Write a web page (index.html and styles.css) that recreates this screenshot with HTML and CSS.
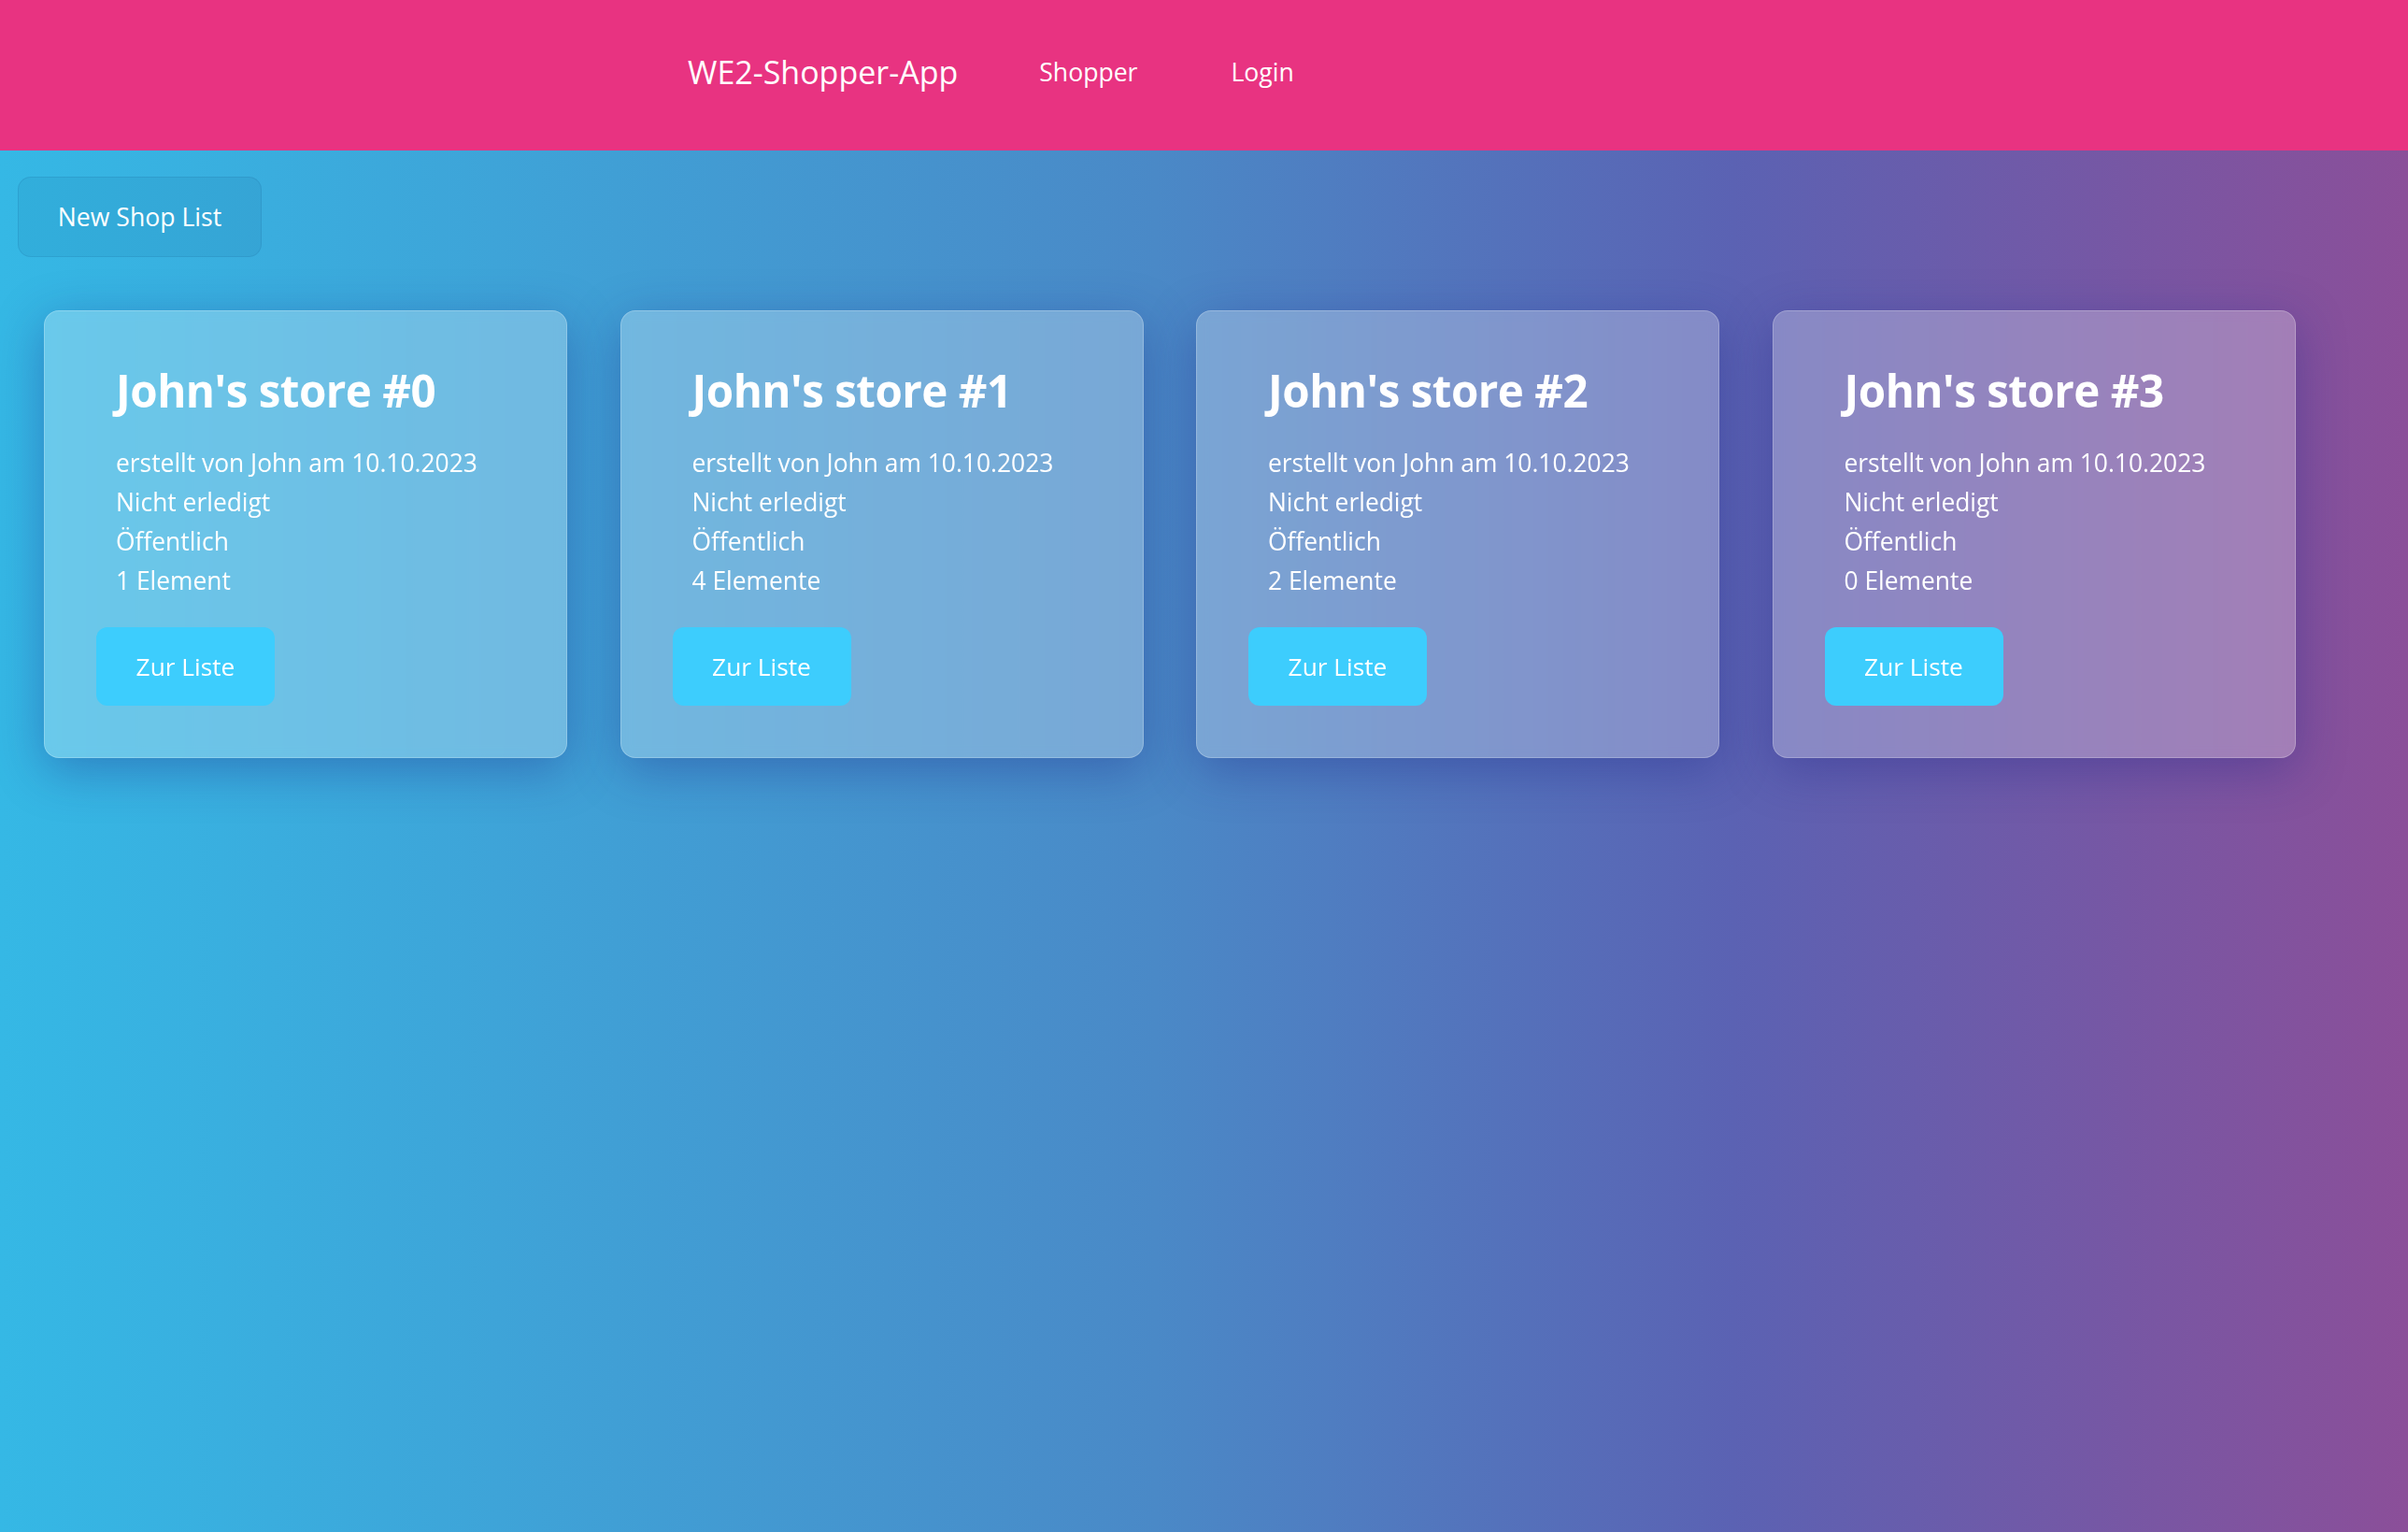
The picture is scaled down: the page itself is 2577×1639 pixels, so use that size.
FILE: index.html
```html
<!DOCTYPE html>
<html lang="de">
<head>
<meta charset="utf-8">
<title>WE2-Shopper-App</title>
<link rel="stylesheet" href="styles.css">
</head>
<body>
<header class="topbar">
  <nav class="nav">
    <a class="brand" href="#">WE2-Shopper-App</a>
    <a class="nav-link" href="#">Shopper</a>
    <a class="nav-link" href="#">Login</a>
  </nav>
</header>
<main class="main">
  <div class="toolbar">
    <button class="btn-new" type="button">New Shop List</button>
  </div>
  <section class="cards">
    <article class="card">
      <div class="card-text">
        <h2 class="card-title">John's store #0</h2>
        <p class="meta">erstellt von John am 10.10.2023</p>
        <p class="meta">Nicht erledigt</p>
        <p class="meta">Öffentlich</p>
        <p class="meta">1 Element</p>
      </div>
      <button class="btn-list" type="button">Zur Liste</button>
    </article>
    <article class="card">
      <div class="card-text">
        <h2 class="card-title">John's store #1</h2>
        <p class="meta">erstellt von John am 10.10.2023</p>
        <p class="meta">Nicht erledigt</p>
        <p class="meta">Öffentlich</p>
        <p class="meta">4 Elemente</p>
      </div>
      <button class="btn-list" type="button">Zur Liste</button>
    </article>
    <article class="card">
      <div class="card-text">
        <h2 class="card-title">John's store #2</h2>
        <p class="meta">erstellt von John am 10.10.2023</p>
        <p class="meta">Nicht erledigt</p>
        <p class="meta">Öffentlich</p>
        <p class="meta">2 Elemente</p>
      </div>
      <button class="btn-list" type="button">Zur Liste</button>
    </article>
    <article class="card">
      <div class="card-text">
        <h2 class="card-title">John's store #3</h2>
        <p class="meta">erstellt von John am 10.10.2023</p>
        <p class="meta">Nicht erledigt</p>
        <p class="meta">Öffentlich</p>
        <p class="meta">0 Elemente</p>
      </div>
      <button class="btn-list" type="button">Zur Liste</button>
    </article>
  </section>
</main>
</body>
</html>
```

FILE: styles.css
```css
* { box-sizing: border-box; }

html, body {
  margin: 0;
  padding: 0;
}

body {
  min-height: 100vh;
  font-family: "Open Sans", "Noto Sans", sans-serif;
  color: #fff;
  background: linear-gradient(to right, #35b8e5 0%, #4a89c7 48%, #5b62b3 72%, #8b4f99 100%);
}

.topbar {
  height: 161px;
  background: #e83381;
  display: flex;
  align-items: center;
}

.nav {
  display: flex;
  align-items: center;
  padding-left: 736px;
  padding-bottom: 7px;
}

.brand {
  color: #fff;
  text-decoration: none;
  font-size: 34px;
  margin-right: 87px;
}

.nav-link {
  color: #fff;
  text-decoration: none;
  font-size: 26.6px;
  margin-right: 100px;
}

.main {
  padding: 28px 19px 0 47px;
}

.toolbar {
  margin-left: -28px;
}

.btn-new {
  width: 261px;
  height: 86px;
  border-radius: 14px;
  border: 1px solid rgba(0, 60, 110, 0.1);
  background: rgba(0, 40, 80, 0.06);
  color: #fff;
  font-family: inherit;
  font-size: 26.6px;
  cursor: pointer;
}

.cards {
  display: flex;
  gap: 56.5px;
  margin-top: 57px;
}

.card {
  width: 560px;
  height: 479px;
  border-radius: 16px;
  border: 1.5px solid rgba(255, 255, 255, 0.22);
  background: rgba(255, 255, 255, 0.26);
  box-shadow: 0 13px 52px rgba(31, 38, 135, 0.37);
  backdrop-filter: blur(6px);
  padding: 53px 55px 55px 55px;
  display: flex;
  flex-direction: column;
}

.card-text {
  padding-left: 21px;
}

.card-title {
  margin: 0 0 24px 0;
  font-size: 47.5px;
  font-weight: 700;
  line-height: 64px;
  letter-spacing: -0.5px;
}

.meta {
  margin: 0;
  font-size: 26.4px;
  line-height: 42px;
}

.btn-list {
  margin-top: 29px;
  width: 191px;
  height: 86px;
  border: none;
  border-radius: 12px;
  background: #3dcdfd;
  color: #fff;
  font-family: inherit;
  font-size: 26.3px;
  cursor: pointer;
}
```
